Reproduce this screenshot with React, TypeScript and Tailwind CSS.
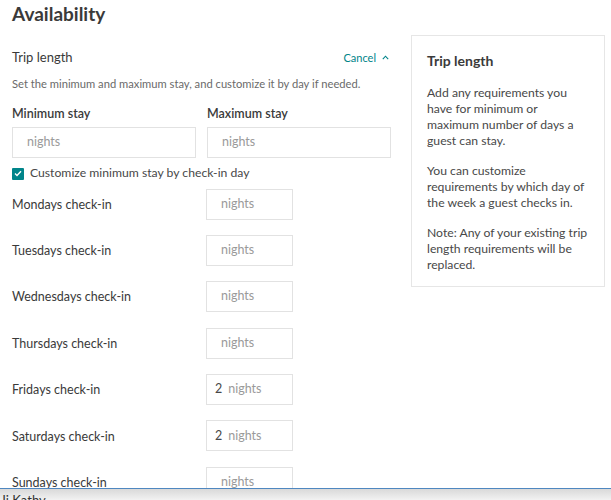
import React from "react";

const days = [
  { label: "Mondays check-in", value: "" },
  { label: "Tuesdays check-in", value: "" },
  { label: "Wednesdays check-in", value: "" },
  { label: "Thursdays check-in", value: "" },
  { label: "Fridays check-in", value: "2" },
  { label: "Saturdays check-in", value: "2" },
  { label: "Sundays check-in", value: "" },
];

function NightsBox({ value, wide }: { value: string; wide?: boolean }) {
  return (
    <div
      className={
        "h-[31px] border border-[#e2e2e2] bg-white flex items-center text-[12.5px] " +
        (wide ? "w-[184px]" : "w-[87px]") +
        (value ? " pl-[8px]" : " pl-[14px]")
      }
    >
      {value ? (
        <span className="text-[#484848]">{value}</span>
      ) : null}
      <span className={"text-[#9a9a9a]" + (value ? " ml-[6px]" : "")}>nights</span>
    </div>
  );
}

export default function App() {
  return (
    <div
      className="w-[611px] h-[500px] bg-white overflow-hidden text-[#484848]"
      style={{ fontFamily: "Lato, 'Liberation Sans', sans-serif" }}
    >
      <div className="h-[488px] overflow-hidden flex">
        <div className="ml-[12px] w-[378px] flex flex-col">
          <h1 className="text-[19px] leading-[28px] font-bold text-[#3a3a3a]">Availability</h1>
          <div className="mt-[20px] flex items-center justify-between h-[20px]">
            <span className="text-[13px] text-[#3a3a3a]">Trip length</span>
            <span className="flex items-center gap-[6px] text-[11px] text-[#008489] mr-[1px]">
              Cancel
              <svg width="7" height="5" viewBox="0 0 7 5" fill="none">
                <path d="M0.8 4.2 L3.5 1.2 L6.2 4.2" stroke="#008489" strokeWidth="1.1" />
              </svg>
            </span>
          </div>
          <p className="mt-[8px] text-[11.2px] leading-[16px] text-[#6a6a6a]">
            Set the minimum and maximum stay, and customize it by day if needed.
          </p>
          <div className="mt-[13px] flex gap-[11px]">
            <div className="flex flex-col w-[184px]">
              <span className="text-[12.5px] leading-[18px] font-semibold text-[#3a3a3a]">Minimum stay</span>
              <div className="mt-[4px]">
                <NightsBox value="" wide />
              </div>
            </div>
            <div className="flex flex-col w-[184px]">
              <span className="text-[12.5px] leading-[18px] font-semibold text-[#3a3a3a]">Maximum stay</span>
              <div className="mt-[4px]">
                <NightsBox value="" wide />
              </div>
            </div>
          </div>
          <div className="mt-[8px] flex items-center gap-[6px] h-[16px]">
            <span className="w-[12px] h-[12px] bg-[#00858a] rounded-[1px] flex items-center justify-center">
              <svg width="8" height="7" viewBox="0 0 8 7" fill="none">
                <path d="M1 3.6 L3 5.5 L7 1.2" stroke="white" strokeWidth="1.4" />
              </svg>
            </span>
            <span className="text-[12.2px] text-[#484848]">Customize minimum stay by check-in day</span>
          </div>
          <div className="mt-[7px] flex flex-col gap-[15.4px]">
            {days.map((d) => (
              <div key={d.label} className="flex items-center h-[31px]">
                <span className="w-[194px] text-[12.5px] text-[#3a3a3a] pt-[2px]">{d.label}</span>
                <NightsBox value={d.value} />
              </div>
            ))}
          </div>
        </div>
        <div className="ml-[21px] mt-[35px] w-[194px] self-start border border-[#e6e6e6] px-[15px] pt-[15px] pb-[13px] text-[12.2px] leading-[16px] text-[#484848]">
          <div className="text-[14px] leading-[20px] font-bold text-[#3a3a3a]">Trip length</div>
          <p className="mt-[14px] whitespace-nowrap">
            Add any requirements you<br />have for minimum or<br />maximum number of days a<br />guest can stay.
          </p>
          <p className="mt-[14px] whitespace-nowrap">
            You can customize<br />requirements by which day of<br />the week a guest checks in.
          </p>
          <p className="mt-[14px] whitespace-nowrap">
            Note: Any of your existing trip<br />length requirements will be<br />replaced.
          </p>
        </div>
      </div>
      <div className="h-[12px] border-t border-[#4f87c0] bg-gradient-to-b from-[#d9d9d9] to-[#f2f2f2] overflow-hidden">
        <div className="ml-[-4px] mt-[3px] text-[13px] leading-[16px] text-[#333]">Hi Kathy</div>
      </div>
    </div>
  );
}
